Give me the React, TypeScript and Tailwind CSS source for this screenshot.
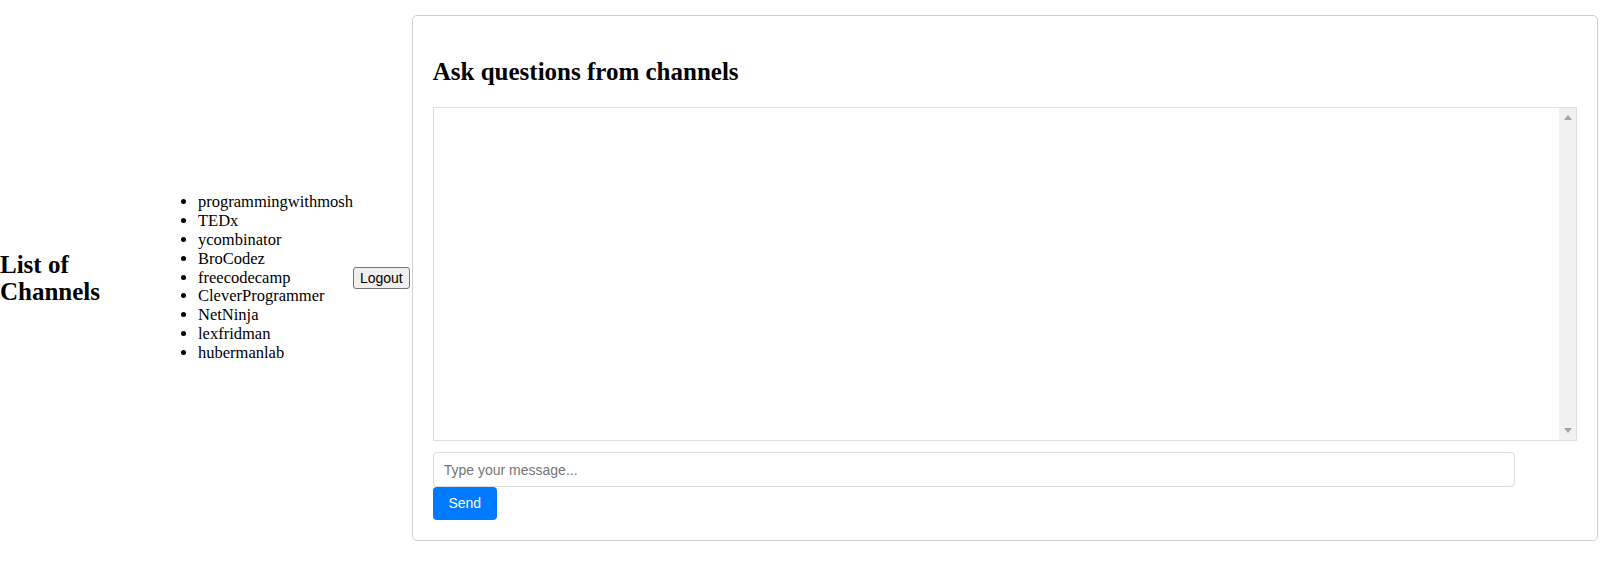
import React, { useState } from 'react';

const channels = [
  'programmingwithmosh',
  'TEDx',
  'ycombinator',
  'BroCodez',
  'freecodecamp',
  'CleverProgrammer',
  'NetNinja',
  'lexfridman',
  'hubermanlab',
];

const App: React.FC = () => {
  const [message, setMessage] = useState('');

  return (
    <div className="flex items-center bg-white text-black font-['Liberation_Serif',serif]">
      {/* Sidebar */}
      <h2 className="w-[158px] shrink-0 text-[25px] font-bold leading-[27.4px]">
        List of Channels
      </h2>
      <ul className="shrink-0 list-disc pl-10 my-4 text-[16.5px] leading-[18.8px]">
        {channels.map((c) => (
          <li key={c}>{c}</li>
        ))}
      </ul>
      <button className="shrink-0 h-[22px] px-[6px] border border-[#767676] bg-[#efefef] rounded-[3px] text-[14px] leading-[16px] font-['Liberation_Sans',Arial,sans-serif] text-black">
        Logout
      </button>

      {/* Chat card */}
      <div className="flex-1 min-w-0 my-[15px] ml-[2px] mr-[2px] border border-[#d0d0d0] rounded-[5px] p-5">
        <h2 className="mt-[22px] mb-[22px] text-[25px] font-bold leading-[27px]">
          Ask questions from channels
        </h2>

        <div className="flex h-[334px] border border-[#dedede]">
          <div className="flex-1" />
          <div className="w-[17px] bg-[#f1f1f1] flex flex-col items-center justify-between pt-[7px] pb-[7px]">
            <svg width="8" height="5" viewBox="0 0 8 5">
              <path d="M0 5 L4 0 L8 5 Z" fill="#a3a3a3" />
            </svg>
            <svg width="8" height="5" viewBox="0 0 8 5">
              <path d="M0 0 L8 0 L4 5 Z" fill="#a3a3a3" />
            </svg>
          </div>
        </div>

        <input
          type="text"
          value={message}
          onChange={(e) => setMessage(e.target.value)}
          placeholder="Type your message..."
          className="block mt-[11px] w-[calc(100%-62px)] h-[35px] px-[10px] border border-[#dcdcdc] rounded-[4px] text-[14px] font-['Liberation_Sans',Arial,sans-serif] placeholder:text-[#757575] outline-none"
        />
        <button className="block h-[33px] w-[64px] bg-[#007bff] text-white rounded-[4px] text-[14px] font-['Liberation_Sans',Arial,sans-serif]">
          Send
        </button>
      </div>
    </div>
  );
};

export default App;
